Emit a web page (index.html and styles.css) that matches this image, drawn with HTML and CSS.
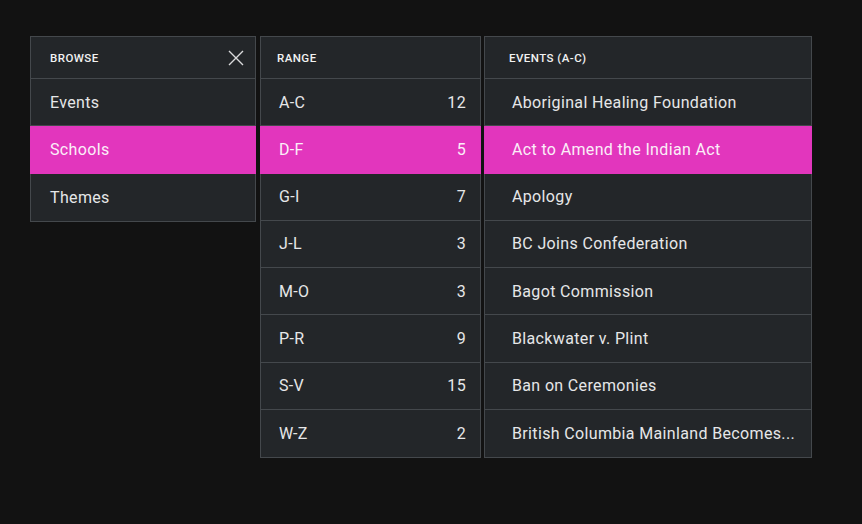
FILE: index.html
```html
<!DOCTYPE html>
<html>
<head>
<meta charset="utf-8">
<link rel="stylesheet" href="styles.css">
</head>
<body>
<div class="menus">
  <div class="panel browse">
    <div class="head">
      <span>BROWSE</span>
      <svg class="close" width="16" height="16" viewBox="0 0 16 16"><path d="M1 1L15 15M15 1L1 15" stroke="#d9dadb" stroke-width="1.4" fill="none"/></svg>
    </div>
    <div class="row">Events</div>
    <div class="row sel">Schools</div>
    <div class="row">Themes</div>
  </div>
  <div class="panel range">
    <div class="head"><span>RANGE</span></div>
    <div class="row"><span>A-C</span><span>12</span></div>
    <div class="row sel"><span>D-F</span><span>5</span></div>
    <div class="row"><span>G-I</span><span>7</span></div>
    <div class="row"><span>J-L</span><span>3</span></div>
    <div class="row"><span>M-O</span><span>3</span></div>
    <div class="row"><span>P-R</span><span>9</span></div>
    <div class="row"><span>S-V</span><span>15</span></div>
    <div class="row"><span>W-Z</span><span>2</span></div>
  </div>
  <div class="panel events">
    <div class="head"><span>EVENTS (A-C)</span></div>
    <div class="row">Aboriginal Healing Foundation</div>
    <div class="row sel">Act to Amend the Indian Act</div>
    <div class="row">Apology</div>
    <div class="row">BC Joins Confederation</div>
    <div class="row">Bagot Commission</div>
    <div class="row">Blackwater v. Plint</div>
    <div class="row">Ban on Ceremonies</div>
    <div class="row">British Columbia Mainland Becomes...</div>
  </div>
</div>
</body>
</html>
```
FILE: styles.css
```css
html, body {
  margin: 0;
  padding: 0;
  background: #121212;
}
body {
  font-family: Roboto, "Liberation Sans", sans-serif;
  color: #e6e7e8;
}
.menus {
  display: flex;
  align-items: flex-start;
  padding: 36px 0 0 30px;
}
.panel {
  background: #232629;
  border: 1px solid #44484c;
  box-sizing: border-box;
}
.browse { width: 226px; }
.range { width: 221px; margin-left: 4px; }
.events { width: 328px; margin-left: 3px; }
.head {
  height: 42px;
  box-sizing: border-box;
  border-bottom: 1px solid #44484c;
  display: flex;
  align-items: center;
  justify-content: space-between;
  font-size: 11.5px;
  font-weight: 500;
  letter-spacing: 0.45px;
  color: #f2f2f2;
  padding: 1px 11px 0 19px;
}
.range .head { padding-left: 16px; }
.events .head { padding-left: 24px; }
.close { display: block; }
.row {
  height: 47.25px;
  box-sizing: border-box;
  border-bottom: 1px solid #44484c;
  display: flex;
  align-items: center;
  justify-content: space-between;
  font-size: 16px;
  letter-spacing: 0.35px;
  padding: 0 14px 0 19px;
  white-space: nowrap;
}
.row:first-of-type { padding-top: 0; }
.row:last-child { border-bottom: none; }
.range .row { padding-left: 18px; }
.events .row { padding-left: 27px; padding-right: 14px; }
.row.sel {
  background: #e236bd;
  border-bottom-color: #e236bd;
  color: #fbeef8;
  margin: 0 -1px;
  padding-right: 15px;
}
.browse .row.sel { padding-left: 20px; }
.range .row.sel { padding-left: 19px; }
.events .row.sel { padding-left: 28px; padding-right: 15px; }
```
